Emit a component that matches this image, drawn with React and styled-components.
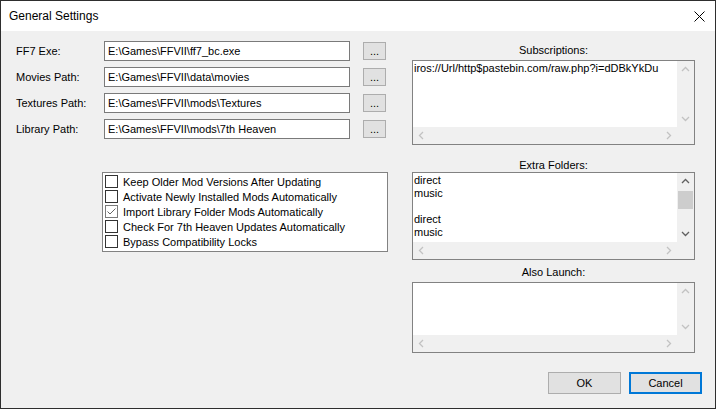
import React from "react";
import styled, { createGlobalStyle } from "styled-components";

const GlobalStyle = createGlobalStyle`
  html, body {
    margin: 0;
    padding: 0;
    background: #f0f0f0;
  }
  body {
    font-family: "Liberation Sans", Arial, sans-serif;
    font-size: 11px;
    color: #000;
  }
`;

const Window = styled.div`
  width: 716px;
  height: 409px;
  box-sizing: border-box;
  border: 1px solid #2e2e2e;
  display: flex;
  flex-direction: column;
  background: #f0f0f0;
  overflow: hidden;
`;

const TitleBar = styled.div`
  height: 30px;
  flex: none;
  background: #fff;
  display: flex;
  align-items: center;
  justify-content: space-between;
  padding: 0 10px 0 8px;
`;

const Title = styled.span`
  font-size: 12px;
  color: #000;
`;

const Body = styled.div`
  flex: 1;
  display: flex;
  flex-direction: column;
  padding: 10px 13px 0 15px;
`;

const Columns = styled.div`
  display: flex;
  padding-right: 7px;
`;

const LeftPane = styled.div`
  width: 372px;
  display: flex;
  flex-direction: column;
`;

const PathList = styled.div`
  display: flex;
  flex-direction: column;
  gap: 6px;
`;

const PathRow = styled.div`
  display: flex;
  align-items: center;
  height: 20px;
`;

const FieldLabel = styled.span`
  width: 88px;
  flex: none;
`;

const PathInput = styled.div`
  width: 246px;
  height: 20px;
  box-sizing: border-box;
  border: 1px solid #7a7a7a;
  background: #fff;
  padding: 0 3px;
  line-height: 18px;
  white-space: nowrap;
  overflow: hidden;
`;

const BrowseButton = styled.button`
  margin-left: 13px;
  width: 23px;
  height: 18px;
  box-sizing: border-box;
  border: 1px solid #adadad;
  background: #e1e1e1;
  font: inherit;
  padding: 0;
  line-height: 16px;
  color: #000;
`;

const CheckList = styled.div`
  margin: 33px 0 0 86px;
  width: 286px;
  height: 80px;
  box-sizing: border-box;
  border: 1px solid #828282;
  background: #fff;
  padding: 1px 2px;
`;

const CheckItem = styled.div`
  height: 15px;
  display: flex;
  align-items: center;
  gap: 5px;
  white-space: nowrap;
`;

const CheckBox = styled.span`
  width: 13px;
  height: 13px;
  box-sizing: border-box;
  border: 1px solid ${(p) => (p.$checked ? "#7a7a7a" : "#333")};
  background: #fff;
  display: flex;
  align-items: center;
  justify-content: center;
  flex: none;
`;

const RightPane = styled.div`
  width: 283px;
  margin-left: 24px;
  padding-top: 3px;
  display: flex;
  flex-direction: column;
`;

const Caption = styled.div`
  text-align: center;
  line-height: 13px;
  margin-top: ${(p) => p.$top || 0}px;
  margin-bottom: ${(p) => p.$bottom ?? 3}px;
`;

const ScrollBox = styled.div`
  height: ${(p) => p.$height}px;
  box-sizing: border-box;
  border: 1px solid #828282;
  display: grid;
  grid-template-columns: 1fr 17px;
  grid-template-rows: 1fr 17px;
  background: #f0f0f0;
`;

const BoxContent = styled.div`
  background: #fff;
  padding: 1px 0 0 1px;
  line-height: 13px;
  white-space: pre;
  overflow: hidden;
`;

const VScroll = styled.div`
  display: flex;
  flex-direction: column;
  align-items: center;
  background: #f0f0f0;
`;

const HScroll = styled.div`
  display: flex;
  align-items: center;
  justify-content: space-between;
  background: #f0f0f0;
`;

const ArrowCell = styled.div`
  width: 17px;
  height: 17px;
  flex: none;
  display: flex;
  align-items: center;
  justify-content: center;
`;

const Track = styled.div`
  flex: 1;
  width: 100%;
  display: flex;
  flex-direction: column;
  align-items: center;
`;

const Thumb = styled.div`
  width: 15px;
  height: 18px;
  margin-top: 1px;
  background: #cdcdcd;
`;

const Corner = styled.div`
  background: #f0f0f0;
`;

const Footer = styled.div`
  display: flex;
  justify-content: flex-end;
  gap: 8px;
  margin-top: 19px;
`;

const DialogButton = styled.button`
  width: 73px;
  height: 22px;
  box-sizing: border-box;
  border: ${(p) => (p.$default ? "2px solid #0078d7" : "1px solid #adadad")};
  background: #e1e1e1;
  font: inherit;
  color: #000;
  padding: 0;
`;

const Chevron = ({ dir, enabled }) => {
  const rot = { up: 0, right: 90, down: 180, left: 270 }[dir];
  return (
    <svg width="9" height="9" viewBox="0 0 9 9" style={{ transform: `rotate(${rot}deg)` }}>
      <polyline
        points="1,6 4.5,2.5 8,6"
        fill="none"
        stroke={enabled ? "#606060" : "#c2c2c2"}
        strokeWidth="1.3"
      />
    </svg>
  );
};

const ScrollArea = ({ height, children, enabled, thumb }) => (
  <ScrollBox $height={height}>
    <BoxContent>{children}</BoxContent>
    <VScroll>
      <ArrowCell>
        <Chevron dir="up" enabled={enabled} />
      </ArrowCell>
      <Track>{thumb && <Thumb />}</Track>
      <ArrowCell>
        <Chevron dir="down" enabled={enabled} />
      </ArrowCell>
    </VScroll>
    <HScroll>
      <ArrowCell>
        <Chevron dir="left" />
      </ArrowCell>
      <ArrowCell>
        <Chevron dir="right" />
      </ArrowCell>
    </HScroll>
    <Corner />
  </ScrollBox>
);

const paths = [
  ["FF7 Exe:", "E:\\Games\\FFVII\\ff7_bc.exe"],
  ["Movies Path:", "E:\\Games\\FFVII\\data\\movies"],
  ["Textures Path:", "E:\\Games\\FFVII\\mods\\Textures"],
  ["Library Path:", "E:\\Games\\FFVII\\mods\\7th Heaven"],
];

const options = [
  ["Keep Older Mod Versions After Updating", false],
  ["Activate Newly Installed Mods Automatically", false],
  ["Import Library Folder Mods Automatically", true],
  ["Check For 7th Heaven Updates Automatically", false],
  ["Bypass Compatibility Locks", false],
];

export default function App() {
  return (
    <>
      <GlobalStyle />
      <Window>
        <TitleBar>
          <Title>General Settings</Title>
          <svg width="11" height="11" viewBox="0 0 11 11">
            <path d="M0.5 0.5 L10.5 10.5 M10.5 0.5 L0.5 10.5" stroke="#000" strokeWidth="1" />
          </svg>
        </TitleBar>
        <Body>
          <Columns>
            <LeftPane>
              <PathList>
                {paths.map(([label, value]) => (
                  <PathRow key={label}>
                    <FieldLabel>{label}</FieldLabel>
                    <PathInput>{value}</PathInput>
                    <BrowseButton>...</BrowseButton>
                  </PathRow>
                ))}
              </PathList>
              <CheckList>
                {options.map(([text, checked]) => (
                  <CheckItem key={text}>
                    <CheckBox $checked={checked}>
                      {checked && (
                        <svg width="11" height="11" viewBox="0 0 11 11">
                          <polyline points="1.5,5.5 4,8 9.5,2.5" fill="none" stroke="#666" strokeWidth="1" />
                        </svg>
                      )}
                    </CheckBox>
                    {text}
                  </CheckItem>
                ))}
              </CheckList>
            </LeftPane>
            <RightPane>
              <Caption>Subscriptions:</Caption>
              <ScrollArea height={85}>iros://Url/http$pastebin.com/raw.php?i=dDBkYkDu</ScrollArea>
              <Caption $top={14} $bottom={0}>Extra Folders:</Caption>
              <ScrollArea height={88} enabled thumb>
                {"direct\nmusic\n\ndirect\nmusic"}
              </ScrollArea>
              <Caption $top={6}>Also Launch:</Caption>
              <ScrollArea height={71} />
            </RightPane>
          </Columns>
          <Footer>
            <DialogButton>OK</DialogButton>
            <DialogButton $default>Cancel</DialogButton>
          </Footer>
        </Body>
      </Window>
    </>
  );
}
